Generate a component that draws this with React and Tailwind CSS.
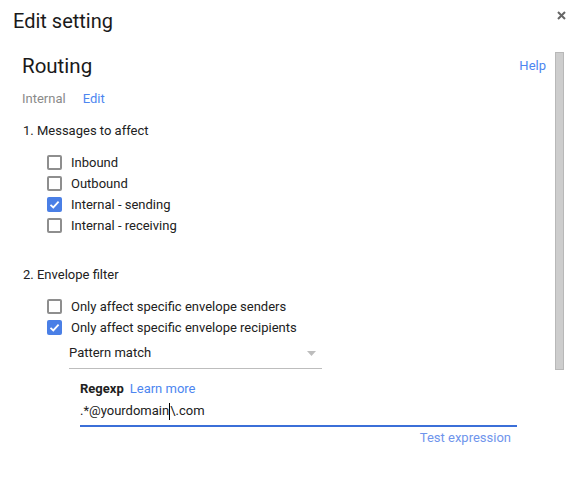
import React from "react";

const font = { fontFamily: "Roboto, 'Liberation Sans', sans-serif" };

function Box({ checked }) {
  if (checked) {
    return (
      <span className="w-[15px] h-[15px] rounded-[2px] bg-[#4a7fe6] flex items-center justify-center shrink-0">
        <svg width="11" height="11" viewBox="0 0 11 11">
          <path d="M1.5 5.8 L4.3 8.4 L9.6 2.6" fill="none" stroke="#fff" strokeWidth="1.8" />
        </svg>
      </span>
    );
  }
  return <span className="w-[15px] h-[15px] rounded-[2px] border-2 border-[#8e8e8e] shrink-0 box-border" />;
}

function Row({ checked, label }) {
  return (
    <div className="h-[21px] flex items-center pl-[25px]">
      <Box checked={checked} />
      <span className="ml-[9px] text-[13px] text-[#212121] leading-[21px]">{label}</span>
    </div>
  );
}

export default function App() {
  return (
    <div className="w-[578px] h-[489px] bg-white overflow-hidden" style={font}>
      <div className="h-[40px] flex items-start justify-between pl-[13px] pr-[12px]">
        <div className="pt-[9px] text-[20px] leading-[24px] text-[#1a1a1a]">Edit setting</div>
        <svg className="mt-[11px]" width="9" height="9" viewBox="0 0 9 9">
          <path d="M1 1 L8 8 M8 1 L1 8" stroke="#666" strokeWidth="2" />
        </svg>
      </div>
      <div className="flex">
        <div className="flex-1 pl-[22px] pr-[9px]">
          <div className="mt-[13px] h-[26px] flex items-center justify-between">
            <span className="text-[20.5px] leading-[26px] text-[#1a1a1a]">Routing</span>
            <span className="text-[13px] text-[#4d86f0]">Help</span>
          </div>
          <div className="mt-[10px] h-[20px] flex items-center text-[13px]">
            <span className="text-[#8a8a8a]">Internal</span>
            <span className="ml-[17px] text-[#4d86f0]">Edit</span>
          </div>
          <div className="mt-[12px] h-[20px] flex items-center text-[13px] text-[#212121] pl-px">
            1. Messages to affect
          </div>
          <div className="mt-[11px]">
            <Row label="Inbound" />
            <Row label="Outbound" />
            <Row checked label="Internal - sending" />
            <Row label="Internal - receiving" />
          </div>
          <div className="mt-[29px] h-[20px] flex items-center text-[13px] text-[#212121] pl-px">
            2. Envelope filter
          </div>
          <div className="mt-[11px]">
            <Row label="Only affect specific envelope senders" />
            <Row checked label="Only affect specific envelope recipients" />
          </div>
          <div className="ml-[47px] w-[253px] mt-[3px] pt-[2px] pb-[5px] border-b border-[#bdbdbd] flex items-center justify-between">
            <span className="h-[20px] leading-[20px] text-[13px] text-[#212121]">Pattern match</span>
            <svg className="mr-[6px]" width="9" height="5" viewBox="0 0 9 5">
              <path d="M0 0 L9 0 L4.5 5 Z" fill="#bdbdbd" />
            </svg>
          </div>
          <div className="ml-[58px] w-[437px]">
            <div className="mt-[10px] h-[20px] flex items-center text-[13px]">
              <span className="font-bold text-[#212121]">Regexp</span>
              <span className="ml-[6px] text-[#4d86f0]">Learn more</span>
            </div>
            <div className="mt-[2px] h-[20px] flex items-center text-[13px] text-[#212121]">
              <span>.*@yourdomain</span>
              <span className="inline-block w-px h-[17px] bg-black" />
              <span>\.com</span>
            </div>
            <div className="mt-[4px] h-[2px] bg-[#3b6fd8]" />
            <div className="mt-[1px] h-[20px] flex items-center justify-end pr-[6px] text-[13px] text-[#6f95ec]">
              Test expression
            </div>
          </div>
        </div>
        <div className="w-[9px] mr-[14px] mt-[12px] h-[318px] bg-[#cdcdcd] border border-[#b8b8b8] box-border" />
      </div>
    </div>
  );
}
